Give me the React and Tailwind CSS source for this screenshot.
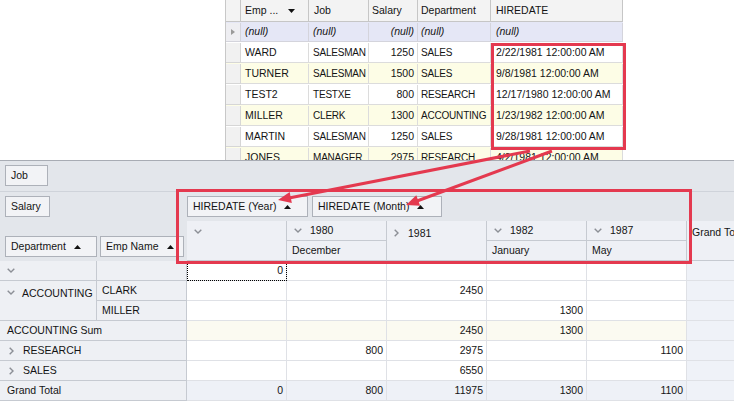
import React from 'react';

const RED = '#e4394f';

const ChevDown = () => (
  <svg width="8" height="5" viewBox="0 0 8 5" className="shrink-0">
    <path d="M0.7 0.7 L4 4 L7.3 0.7" stroke="#8c8f96" strokeWidth="1.4" fill="none" />
  </svg>
);

const ChevRight = () => (
  <svg width="5" height="8" viewBox="0 0 5 8" className="shrink-0">
    <path d="M0.7 0.7 L4 4 L0.7 7.3" stroke="#8c8f96" strokeWidth="1.4" fill="none" />
  </svg>
);

const SortUp = () => (
  <svg width="7" height="4" viewBox="0 0 7 4" className="shrink-0">
    <path d="M0 4 L3.5 0 L7 4 Z" fill="#111" />
  </svg>
);

const SortDown = () => (
  <svg width="7" height="4" viewBox="0 0 7 4" className="shrink-0">
    <path d="M0 0 L3.5 4 L7 0 Z" fill="#111" />
  </svg>
);

// top data grid
const gridRows = [
  ['WARD', 'SALESMAN', '1250', 'SALES', '2/22/1981 12:00:00 AM'],
  ['TURNER', 'SALESMAN', '1500', 'SALES', '9/8/1981 12:00:00 AM'],
  ['TEST2', 'TESTXE', '800', 'RESEARCH', '12/17/1980 12:00:00 AM'],
  ['MILLER', 'CLERK', '1300', 'ACCOUNTING', '1/23/1982 12:00:00 AM'],
  ['MARTIN', 'SALESMAN', '1250', 'SALES', '9/28/1981 12:00:00 AM'],
  ['JONES', 'MANAGER', '2975', 'RESEARCH', '4/2/1981 12:00:00 AM'],
];

function DataGrid() {
  return (
    <div className="w-[398px] h-[160px] overflow-hidden border-l border-[#c8c8c8] bg-white">
      {/* header */}
      <div className="flex h-[22px] bg-[#f3f3f3]">
        <div className="w-[15px] border-r border-b border-[#c6c6c6]" />
        <div className="w-[68px] border-r border-b border-[#c6c6c6] flex items-center pl-[4px] gap-[10px]">
          <span>Emp ...</span>
          <SortDown />
        </div>
        <div className="w-[60px] border-r border-b border-[#c6c6c6] flex items-center pl-[5px]">Job</div>
        <div className="w-[49px] border-r border-b border-[#c6c6c6] flex items-center pl-[3px]">Salary</div>
        <div className="w-[73px] border-r border-b border-[#c6c6c6] flex items-center pl-[3px]">Department</div>
        <div className="w-[132px] border-r border-b border-[#c6c6c6] flex items-center pl-[5px]">HIREDATE</div>
      </div>
      {/* auto filter row */}
      <div className="flex h-[20px] bg-[#e5e7f6] italic pt-[1px]">
        <div className="w-[15px] border-r border-b border-[#d4d4dc] bg-[#eeeef2] flex items-center justify-center">
          <svg width="4" height="6" viewBox="0 0 4 6">
            <path d="M0 0 L4 3 L0 6 Z" fill="#9a9a9a" />
          </svg>
        </div>
        <div className="w-[68px] border-r border-b border-[#d4d4dc] flex items-center pl-[4px]">(null)</div>
        <div className="w-[60px] border-r border-b border-[#d4d4dc] flex items-center pl-[4px]">(null)</div>
        <div className="w-[49px] border-r border-b border-[#d4d4dc] flex items-center justify-end pr-[3px]">(null)</div>
        <div className="w-[73px] border-r border-b border-[#d4d4dc] flex items-center pl-[3px]">(null)</div>
        <div className="w-[132px] border-r border-b border-[#d4d4dc] flex items-center pl-[5px]">(null)</div>
      </div>
      {gridRows.map((r, i) => (
        <div key={i} className={`flex h-[21px] pt-[1px] ${i % 2 ? 'bg-[#fdfde6]' : 'bg-white'}`}>
          <div className="w-[15px] border-r border-b border-[#d6d6d6] bg-[#f1f1f1]" />
          <div className="w-[68px] border-r border-b border-[#dcdcdc] flex items-center pl-[4px]">{r[0]}</div>
          <div className="w-[60px] border-r border-b border-[#dcdcdc] flex items-center pl-[4px] whitespace-nowrap overflow-hidden text-[10px] tracking-[-0.2px]">{r[1]}</div>
          <div className="w-[49px] border-r border-b border-[#dcdcdc] flex items-center justify-end pr-[3px]">{r[2]}</div>
          <div className="w-[73px] border-r border-b border-[#dcdcdc] flex items-center pl-[3px] whitespace-nowrap overflow-hidden text-[10px] tracking-[-0.2px]">{r[3]}</div>
          <div className="w-[132px] border-r border-b border-[#dcdcdc] flex items-center pl-[5px] whitespace-nowrap">{r[4]}</div>
        </div>
      ))}
    </div>
  );
}

const FieldBtn = ({ w, children, sort }) => (
  <div className={`${w} h-[21px] border border-[#adb1b9] bg-[#f2f3f6] flex items-center pl-[5px] gap-[8px] whitespace-nowrap`}>
    <span>{children}</span>
    {sort && <SortUp />}
  </div>
);

const body = [
  { kind: 'first', data: ['0', '', '', '', ''] },
  { kind: 'acc', data: ['', '', '2450', '', ''] },
  { kind: 'miller', data: ['', '', '', '1300', ''] },
  { kind: 'wide', label: 'ACCOUNTING Sum', bg: 'bg-[#fbfaf1]', data: ['', '', '2450', '1300', ''] },
  { kind: 'wide', label: 'RESEARCH', chev: true, bg: 'bg-white', data: ['', '800', '2975', '', '1100'] },
  { kind: 'wide', label: 'SALES', chev: true, bg: 'bg-white', data: ['', '', '6550', '', ''] },
  { kind: 'wide', label: 'Grand Total', bg: 'bg-[#eef1f7]', data: ['0', '800', '11975', '1300', '1100'] },
];

const hdrCell = 'bg-[#eef0f4] border-r border-b border-[#c6cad1] flex items-center';

function PivotBody() {
  const cells = [];
  body.forEach((row, ri) => {
    if (row.kind === 'first') {
      cells.push(<div key={`h${ri}a`} className={`${hdrCell} pl-[7px]`}><ChevDown /></div>);
      cells.push(<div key={`h${ri}b`} className={hdrCell} />);
    } else if (row.kind === 'acc') {
      cells.push(
        <div key={`h${ri}a`} className={`row-span-2 bg-[#eef0f4] border-r border-b border-[#c6cad1] flex items-start pt-[6px] pl-[7px] gap-[7px]`}>
          <div className="pt-[3px]"><ChevDown /></div>
          <span className="leading-[13px]">ACCOUNTING</span>
        </div>
      );
      cells.push(<div key={`h${ri}b`} className={`${hdrCell} pl-[5px]`}>CLARK</div>);
    } else if (row.kind === 'miller') {
      cells.push(<div key={`h${ri}b`} className={`${hdrCell} pl-[5px]`}>MILLER</div>);
    } else {
      cells.push(
        <div key={`h${ri}a`} className={`col-span-2 ${hdrCell} ${row.chev ? 'pl-[9px] gap-[9px]' : 'pl-[7px]'}`}>
          {row.chev && <ChevRight />}
          <span>{row.label}</span>
        </div>
      );
    }
    const bg = row.bg || 'bg-white';
    row.data.forEach((v, ci) => {
      const focus = ri === 0 && ci === 0;
      cells.push(
        <div
          key={`d${ri}-${ci}`}
          className={`${bg} border-r border-b border-[#dfe1e6] flex items-center justify-end pr-[3px] ${focus ? 'outline-1 outline-dotted outline-black -outline-offset-1' : ''}`}
        >
          {v}
        </div>
      );
    });
    cells.push(<div key={`g${ri}`} className="bg-[#eff2f8] border-b border-[#dfe1e6]" />);
  });
  return (
    <div className="grid grid-cols-[97px_90px_100px_100px_100px_100px_100px_1fr] auto-rows-[20px]">
      {cells}
    </div>
  );
}

function ColHeader() {
  const c = 'border-r border-b border-[#c6cad1] flex items-center';
  return (
    <div className="grid grid-cols-[100px_100px_100px_100px_100px_1fr] grid-rows-[20px_20px] bg-[#eef0f5] h-[40px]">
      <div className={`row-span-2 ${c} items-start pt-[8px] pl-[7px]`}><ChevDown /></div>
      <div className={`${c} pl-[7px] gap-[8px]`}><ChevDown /><span>1980</span></div>
      <div className={`row-span-2 ${c} items-start pt-[6px] pl-[7px] gap-[9px]`}>
        <div className="pt-[2px]"><ChevRight /></div>
        <span className="leading-[13px]">1981</span>
      </div>
      <div className={`${c} pl-[7px] gap-[8px]`}><ChevDown /><span>1982</span></div>
      <div className={`${c} pl-[7px] gap-[8px]`}><ChevDown /><span>1987</span></div>
      <div className="row-span-2 border-b border-[#c6cad1] pl-[5px] pt-[4px] whitespace-nowrap overflow-hidden">Grand Total</div>
      <div className={`${c} pl-[5px]`}>December</div>
      <div className={`${c} pl-[5px]`}>January</div>
      <div className={`${c} pl-[5px]`}>May</div>
    </div>
  );
}

function PivotGrid() {
  return (
    <div className="h-[241px] border-t border-[#a8acb4] bg-[#e3e6eb] flex flex-col">
      <div className="h-[31px] border-b border-[#cfd3da] pl-[5px] pt-[4px]">
        <FieldBtn w="w-[43px]">Job</FieldBtn>
      </div>
      <div className="flex h-[69px]">
        <div className="w-[187px] flex flex-col justify-between pl-[5px] pt-[4px] pb-[4px]">
          <FieldBtn w="w-[45px]">Salary</FieldBtn>
          <div className="flex gap-[3px]">
            <FieldBtn w="w-[92px]" sort>Department</FieldBtn>
            <FieldBtn w="w-[84px]" sort>Emp Name</FieldBtn>
          </div>
        </div>
        <div className="flex-1 flex flex-col">
          <div className="h-[29px] flex gap-[4px] pt-[4px]">
            <FieldBtn w="w-[121px]" sort>HIREDATE (Year)</FieldBtn>
            <FieldBtn w="w-[130px]" sort>HIREDATE (Month)</FieldBtn>
          </div>
          <ColHeader />
        </div>
      </div>
      <PivotBody />
    </div>
  );
}

export default function App() {
  return (
    <div className="relative w-[734px] h-[401px] overflow-hidden bg-white text-[10.5px] text-[#141414] font-['Liberation_Sans',Arial,sans-serif]">
      <div className="flex h-[160px]">
        <div className="w-[225px]" />
        <DataGrid />
      </div>
      <PivotGrid />

      {/* annotations */}
      <div className="absolute left-[491px] top-[43px] w-[135px] h-[107px] border-[3px] border-[#e4394f] pointer-events-none" />
      <div className="absolute left-[176px] top-[189px] w-[516px] h-[75px] border-[3px] border-[#e4394f] pointer-events-none" />
      <svg className="absolute inset-0 pointer-events-none" width="734" height="401" viewBox="0 0 734 401">
        <line x1="530" y1="151" x2="289" y2="198" stroke={RED} strokeWidth="3" />
        <polygon points="278,200 291.8,202.9 289.7,192.1" fill={RED} />
        <line x1="552" y1="151" x2="417" y2="201" stroke={RED} strokeWidth="3" />
        <polygon points="406,205 420.1,205.7 416.3,195.3" fill={RED} />
      </svg>
    </div>
  );
}
